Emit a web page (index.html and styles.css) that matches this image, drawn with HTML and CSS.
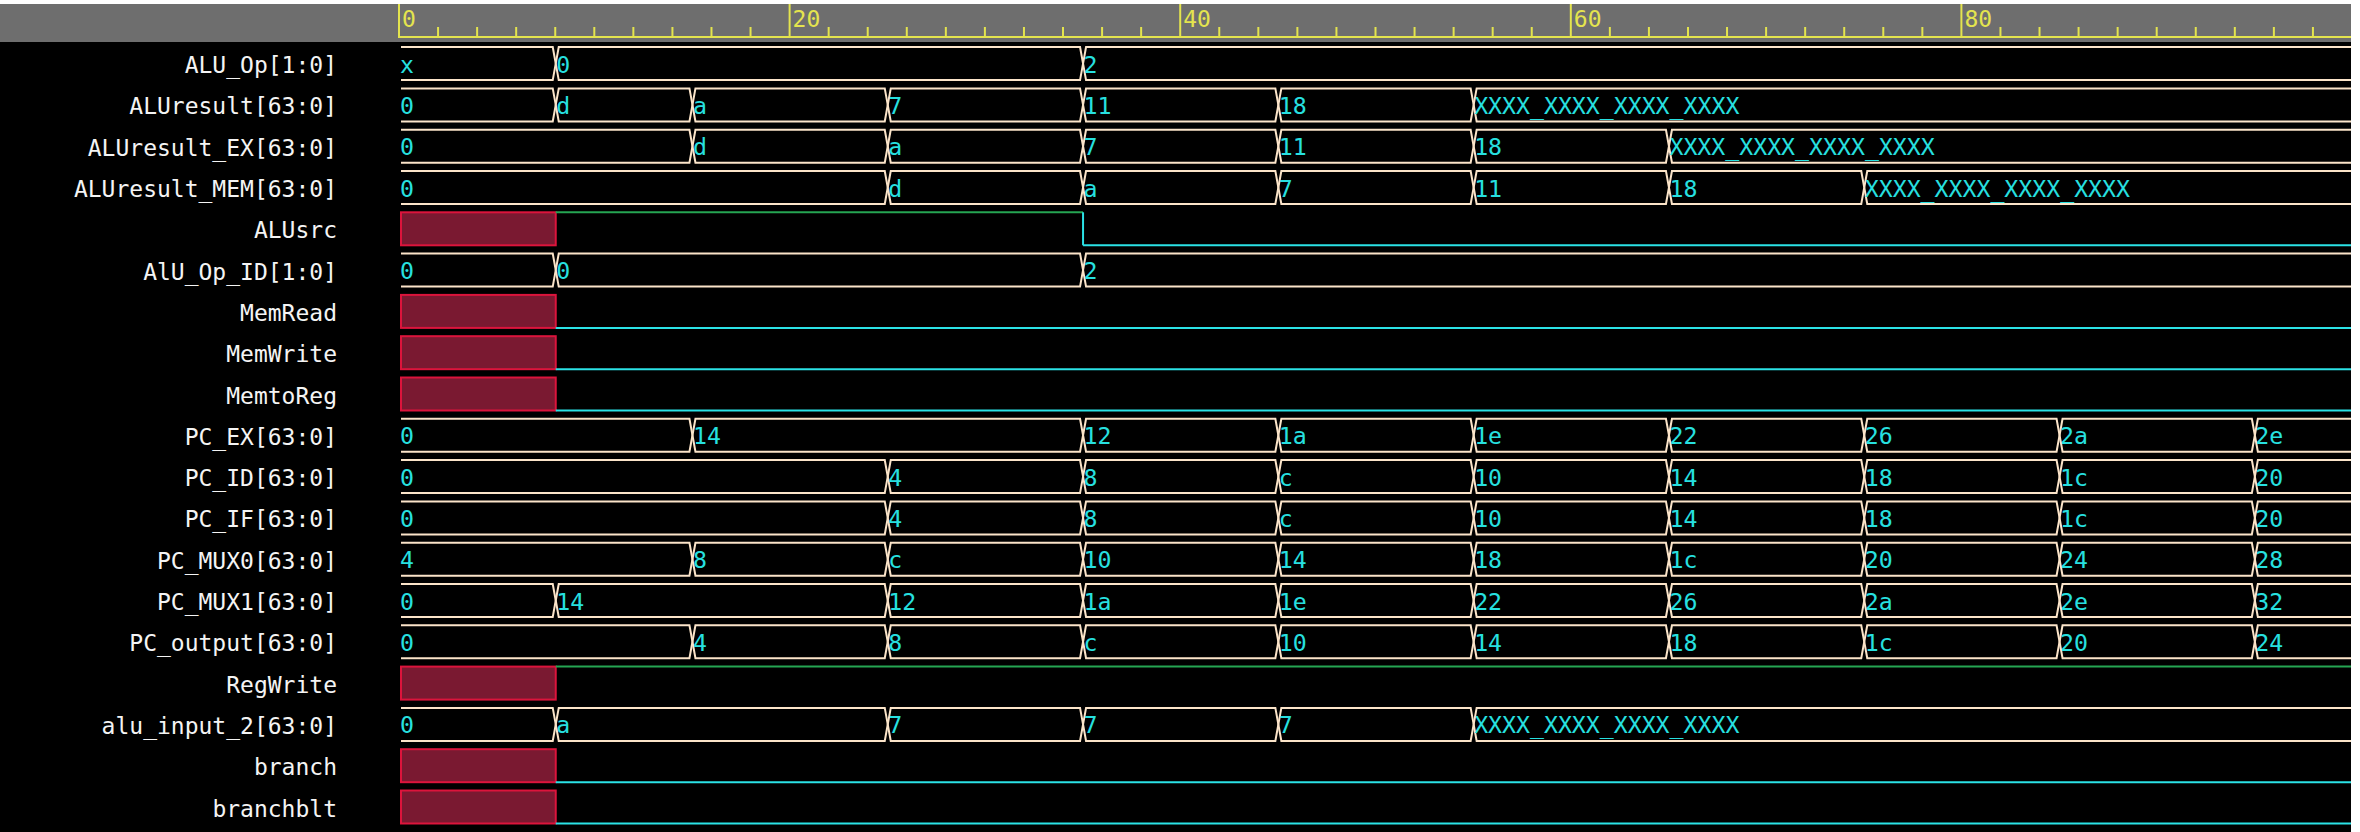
FILE: index.html
```html
<!DOCTYPE html>
<html>
<head>
<meta charset="utf-8">
<title>Waveform</title>
<link rel="stylesheet" href="styles.css">
</head>
<body>
<div class="app">
  <div class="header">
    <div class="header-left"></div>
    <svg id="ruler" class="ruler" xmlns="http://www.w3.org/2000/svg"></svg>
  </div>
  <div class="main">
    <div class="names">
      <div class="name">ALU_Op[1:0]</div>
      <div class="name">ALUresult[63:0]</div>
      <div class="name">ALUresult_EX[63:0]</div>
      <div class="name">ALUresult_MEM[63:0]</div>
      <div class="name">ALUsrc</div>
      <div class="name">AlU_Op_ID[1:0]</div>
      <div class="name">MemRead</div>
      <div class="name">MemWrite</div>
      <div class="name">MemtoReg</div>
      <div class="name">PC_EX[63:0]</div>
      <div class="name">PC_ID[63:0]</div>
      <div class="name">PC_IF[63:0]</div>
      <div class="name">PC_MUX0[63:0]</div>
      <div class="name">PC_MUX1[63:0]</div>
      <div class="name">PC_output[63:0]</div>
      <div class="name">RegWrite</div>
      <div class="name">alu_input_2[63:0]</div>
      <div class="name">branch</div>
      <div class="name">branchblt</div>
    </div>
    <svg id="waves" class="waves" xmlns="http://www.w3.org/2000/svg"></svg>
  </div>
</div>
<script src="script.js"></script>
</body>
</html>
```

FILE: styles.css
```css
html, body {
  margin: 0;
  padding: 0;
  background: #ffffff;
}

.app {
  margin-top: 4px;
  width: 2351px;
  height: 828px;
  background: #000000;
  display: flex;
  flex-direction: column;
  overflow: hidden;
}

.header {
  flex: none;
  height: 37.7px;
  background: #6e6e6e;
  display: flex;
}

.header-left {
  flex: none;
  width: 398px;
}

.ruler {
  display: block;
  flex: none;
  width: 1953px;
  height: 37.7px;
}

.ruler .tick {
  stroke: #e4e44e;
  stroke-width: 2;
}

.ruler .label {
  fill: #e4e44e;
  font-family: "DejaVu Sans Mono", monospace;
  font-size: 23px;
}

.main {
  flex: 1;
  display: flex;
}

.names {
  flex: none;
  width: 398px;
  box-sizing: border-box;
  padding: 5.1px 61px 0 0;
  font-family: "DejaVu Sans Mono", monospace;
  font-size: 23px;
  color: #f4f4f4;
}

.name {
  height: 41.3px;
  box-sizing: border-box;
  padding-top: 2.4px;
  line-height: 33px;
  text-align: right;
  white-space: nowrap;
}

.waves {
  display: block;
  flex: none;
  width: 1953px;
  height: 790.3px;
}

.waves .bus {
  fill: none;
  stroke: #fbe4c9;
  stroke-width: 2;
  stroke-linejoin: miter;
}

.waves .val {
  fill: #27e0e0;
  font-family: "DejaVu Sans Mono", monospace;
  font-size: 23.2px;
}

.waves .xbox {
  fill: #7a1931;
  stroke: #dc143c;
  stroke-width: 2;
}

.waves .low {
  stroke: #2be2e6;
  stroke-width: 2;
}

.waves .high {
  stroke: #25a552;
  stroke-width: 2;
}
```

FILE: script.js
```javascript
(function () {
  var NS = "http://www.w3.org/2000/svg";
  var S = 19.53;
  var W = 1953;
  function X(t) { return 1.5 + S * t; }
  function el(name, attrs, text) {
    var e = document.createElementNS(NS, name);
    for (var k in attrs) e.setAttribute(k, attrs[k]);
    if (text !== undefined) e.textContent = text;
    return e;
  }

  // Ruler
  var ruler = document.getElementById("ruler");
  ruler.appendChild(el("line", { "class": "tick", x1: 0, y1: 33, x2: W, y2: 33 }));
  for (var t = 0; t < 100; t += 2) {
    var x = 1 + S * t;
    if (t % 20 === 0) {
      ruler.appendChild(el("line", { "class": "tick", x1: x, y1: 0, x2: x, y2: 33 }));
      ruler.appendChild(el("text", { "class": "label", x: x + 3, y: 22.5 }, String(t)));
    } else {
      ruler.appendChild(el("line", { "class": "tick", x1: x, y1: 23, x2: x, y2: 33 }));
    }
  }

  var XS = "XXXX_XXXX_XXXX_XXXX";
  var rows = [
    { bus: [[0, "x"], [8, "0"], [35, "2"]] },
    { bus: [[0, "0"], [8, "d"], [15, "a"], [25, "7"], [35, "11"], [45, "18"], [55, XS]] },
    { bus: [[0, "0"], [15, "d"], [25, "a"], [35, "7"], [45, "11"], [55, "18"], [65, XS]] },
    { bus: [[0, "0"], [25, "d"], [35, "a"], [45, "7"], [55, "11"], [65, "18"], [75, XS]] },
    { bit: [[8, 1], [35, 0]] },
    { bus: [[0, "0"], [8, "0"], [35, "2"]] },
    { bit: [[8, 0]] },
    { bit: [[8, 0]] },
    { bit: [[8, 0]] },
    { bus: [[0, "0"], [15, "14"], [35, "12"], [45, "1a"], [55, "1e"], [65, "22"], [75, "26"], [85, "2a"], [95, "2e"]] },
    { bus: [[0, "0"], [25, "4"], [35, "8"], [45, "c"], [55, "10"], [65, "14"], [75, "18"], [85, "1c"], [95, "20"]] },
    { bus: [[0, "0"], [25, "4"], [35, "8"], [45, "c"], [55, "10"], [65, "14"], [75, "18"], [85, "1c"], [95, "20"]] },
    { bus: [[0, "4"], [15, "8"], [25, "c"], [35, "10"], [45, "14"], [55, "18"], [65, "1c"], [75, "20"], [85, "24"], [95, "28"]] },
    { bus: [[0, "0"], [8, "14"], [25, "12"], [35, "1a"], [45, "1e"], [55, "22"], [65, "26"], [75, "2a"], [85, "2e"], [95, "32"]] },
    { bus: [[0, "0"], [15, "4"], [25, "8"], [35, "c"], [45, "10"], [55, "14"], [65, "18"], [75, "1c"], [85, "20"], [95, "24"]] },
    { bit: [[8, 1]] },
    { bus: [[0, "0"], [8, "a"], [25, "7"], [35, "7"], [45, "7"], [55, XS]] },
    { bit: [[8, 0]] },
    { bit: [[8, 0]] }
  ];

  var waves = document.getElementById("waves");
  var D = 3;
  rows.forEach(function (row, i) {
    var yT = 5.1 + 41.3 * i;
    var yB = yT + 33;
    var yM = (yT + yB) / 2;
    if (row.bus) {
      var segs = row.bus;
      for (var s = 0; s < segs.length; s++) {
        var t0 = segs[s][0];
        var t1 = s + 1 < segs.length ? segs[s + 1][0] : null;
        var sx = t0 === 0 ? 3 : X(t0) + D;
        var ex = t1 === null ? W : X(t1) - D;
        var d;
        if (t0 === 0) {
          d = "M" + sx + "," + yT + " H" + ex;
          if (t1 !== null) d += " L" + X(t1) + "," + yM + " L" + ex + "," + yB;
          else d += " M" + ex + "," + yB;
          d += " H" + sx;
        } else {
          d = "M" + X(t0) + "," + yM + " L" + sx + "," + yT + " H" + ex;
          if (t1 !== null) {
            d += " L" + X(t1) + "," + yM + " L" + ex + "," + yB + " H" + sx + " Z";
          } else {
            d += " M" + ex + "," + yB + " H" + sx + " L" + X(t0) + "," + yM;
          }
        }
        waves.appendChild(el("path", { "class": "bus", d: d }));
        var tx = t0 === 0 ? 2 : X(t0) + 0.5;
        waves.appendChild(el("text", { "class": "val", x: tx, y: yT + 25.5 }, segs[s][1]));
      }
    } else {
      var ch = row.bit;
      waves.appendChild(el("rect", { "class": "xbox", x: 3, y: yT, width: X(ch[0][0]) - 3, height: 33 }));
      var prev = null;
      for (var c = 0; c < ch.length; c++) {
        var ts = ch[c][0];
        var te = c + 1 < ch.length ? X(ch[c + 1][0]) : W;
        var lvl = ch[c][1];
        var y = lvl ? yT : yB;
        if (prev !== null && prev !== lvl) {
          waves.appendChild(el("line", { "class": "low", x1: X(ts), y1: yT, x2: X(ts), y2: yB }));
        }
        waves.appendChild(el("line", { "class": lvl ? "high" : "low", x1: X(ts), y1: y, x2: te, y2: y }));
        prev = lvl;
      }
    }
  });
})();
```
